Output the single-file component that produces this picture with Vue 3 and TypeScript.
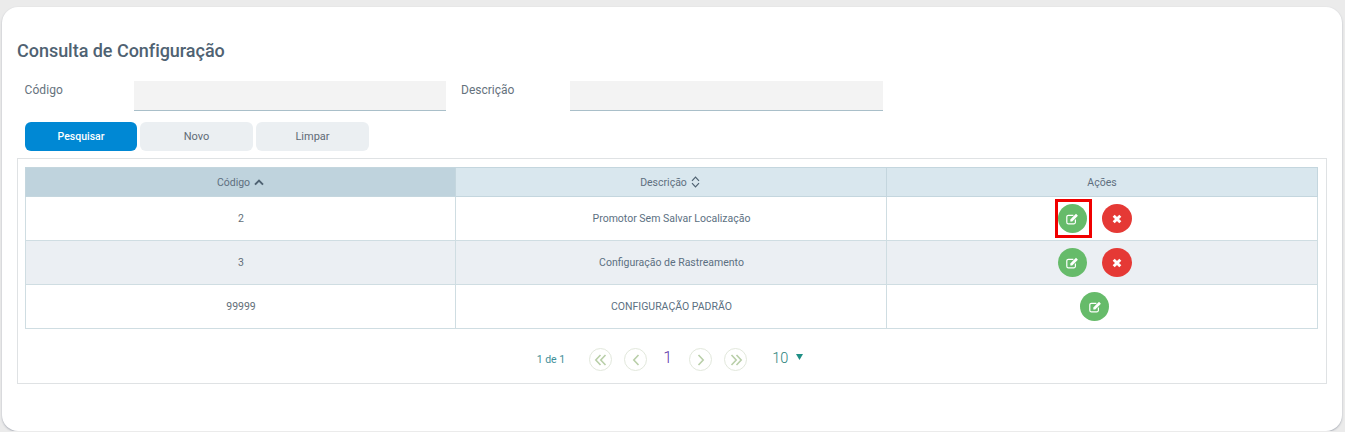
<script setup lang="ts">
interface Row { code: string; desc: string; del: boolean; mark: boolean }
const rows: Row[] = [
  { code: '2', desc: 'Promotor Sem Salvar Localização', del: true, mark: true },
  { code: '3', desc: 'Configuração de Rastreamento', del: true, mark: false },
  { code: '99999', desc: 'CONFIGURAÇÃO PADRÃO', del: false, mark: false },
]
</script>

<template>
  <main class="card">
    <h1 class="title">Consulta de Configuração</h1>
    <form class="filters" @submit.prevent>
      <label class="label first">Código</label>
      <input class="field" type="text" />
      <label class="label second">Descrição</label>
      <input class="field wide" type="text" />
    </form>
    <div class="buttons">
      <button class="btn primary">Pesquisar</button>
      <button class="btn">Novo</button>
      <button class="btn">Limpar</button>
    </div>
    <section class="panel">
      <table class="grid">
        <colgroup>
          <col class="col-a" />
          <col class="col-b" />
          <col class="col-c" />
        </colgroup>
        <thead>
          <tr>
            <th class="sorted">
              <span class="th-in">Código
                <svg class="sort" width="10" height="7" viewBox="0 0 10 7"><path d="M1 5.6 5 1.6l4 4" fill="none" stroke="#4f6272" stroke-width="2"/></svg>
              </span>
            </th>
            <th class="mid">
              <span class="th-in">Descrição
                <svg class="sort" width="9" height="12" viewBox="0 0 9 12"><path d="M1 4.8 4.5 1.2 8 4.8M1 7.2 4.5 10.8 8 7.2" fill="none" stroke="#4f6272" stroke-width="1.2"/></svg>
              </span>
            </th>
            <th>Ações</th>
          </tr>
        </thead>
        <tbody>
          <tr v-for="(r, i) in rows" :key="r.code" :class="{ alt: i === 1 }">
            <td class="text">{{ r.code }}</td>
            <td class="text desc">{{ r.desc }}</td>
            <td>
              <div class="actions">
                <span class="wrap" :class="{ marked: r.mark }">
                  <button class="round green" aria-label="Editar">
                    <svg class="edit" width="13" height="12" viewBox="0 0 13 12">
                      <path d="M9.4 6.6v2.6a1.6 1.6 0 0 1-1.6 1.6H2.4A1.6 1.6 0 0 1 .8 9.2V3.9a1.6 1.6 0 0 1 1.6-1.6h5" fill="none" stroke="#fff" stroke-width="1.2"/>
                      <path d="M4.3 6.5 10 .8l1.9 1.9-5.7 5.7H4.3z" fill="#fff"/>
                    </svg>
                  </button>
                </span>
                <button v-if="r.del" class="round red" aria-label="Excluir">
                  <svg width="10" height="10" viewBox="0 0 10 10"><path d="M1.7 1.7l6.6 6.6M8.3 1.7 1.7 8.3" stroke="#fff" stroke-width="2.9"/></svg>
                </button>
              </div>
            </td>
          </tr>
        </tbody>
      </table>
      <nav class="pager">
        <span class="count">1 de 1</span>
        <button class="page" aria-label="Primeira">
          <svg width="14" height="12" viewBox="0 0 14 12"><path d="M6.5 1 1.8 6l4.7 5M11.5 1 6.8 6l4.7 5" fill="none" stroke="#b9cfa9" stroke-width="1.6"/></svg>
        </button>
        <button class="page" aria-label="Anterior">
          <svg width="8" height="12" viewBox="0 0 8 12"><path d="M6.5 1 1.8 6l4.7 5" fill="none" stroke="#b9cfa9" stroke-width="1.6"/></svg>
        </button>
        <span class="current">1</span>
        <button class="page" aria-label="Próxima">
          <svg width="8" height="12" viewBox="0 0 8 12"><path d="M1.5 1l4.7 5-4.7 5" fill="none" stroke="#b9cfa9" stroke-width="1.6"/></svg>
        </button>
        <button class="page" aria-label="Última">
          <svg width="14" height="12" viewBox="0 0 14 12"><path d="M2.5 1l4.7 5-4.7 5M7.5 1l4.7 5-4.7 5" fill="none" stroke="#b9cfa9" stroke-width="1.6"/></svg>
        </button>
        <span class="size">10</span>
        <svg class="caret" width="7" height="6" viewBox="0 0 7 6"><path d="M0 0h7L3.5 6z" fill="#1f8f85"/></svg>
      </nav>
    </section>
  </main>
</template>

<style>
html, body { margin: 0; background: #ebebeb; }
</style>

<style scoped>
.card {
  box-sizing: border-box;
  width: 1340px;
  height: 424px;
  margin: 7px 0 0 2px;
  padding: 32px 15px 0;
  background: #fff;
  border-radius: 16px;
  box-shadow: 0 1px 2px rgba(90, 100, 120, 0.45);
  font-family: Roboto, "Liberation Sans", sans-serif;
  color: #55626e;
}
.title {
  margin: 0;
  font-size: 18px;
  line-height: 24px;
  font-weight: 500;
  letter-spacing: -0.03px;
  color: #4f6272;
}
.filters {
  display: flex;
  margin-top: 18px;
  height: 30px;
}
.label {
  font-size: 12px;
  line-height: 18px;
  color: #66727d;
}
.first { width: 117px; padding-left: 7.5px; box-sizing: border-box; letter-spacing: 0.1px; }
.second { width: 124px; padding-left: 15px; box-sizing: border-box; }
.field {
  box-sizing: border-box;
  width: 312px;
  height: 30px;
  padding: 0;
  border: 0;
  border-bottom: 1px solid #a9bfc9;
  background: #f3f3f3;
}
.wide { width: 313px; }
.buttons {
  display: flex;
  gap: 3px;
  margin: 11px 0 0 8px;
}
.btn {
  width: 113px;
  height: 29px;
  padding: 0;
  border: 0;
  border-radius: 6px;
  background: #ebeff2;
  color: #5f6b76;
  font: 400 11px Roboto, sans-serif;
}
.primary {
  width: 112px;
  background: #0088d4;
  color: #fff;
  font-size: 10.5px;
  font-weight: 500;
}
.panel {
  box-sizing: border-box;
  height: 226px;
  margin-top: 7px;
  padding: 8px 8px 0 7px;
  border: 1px solid #dfe2e4;
}
.grid {
  box-sizing: border-box;
  width: 1292px;
  table-layout: fixed;
  border-collapse: collapse;
  font-size: 10.5px;
  text-align: center;
  color: #626e78;
}
.col-a { width: 430px; }
.col-b { width: 431px; }
.col-c { width: 431px; }
th {
  height: 28px;
  padding: 0;
  font-weight: 400;
  font-size: 10.5px;
  color: #5e6f7f;
  background: #d9e7ee;
  border: 1px solid #c4d6de;
}
th.sorted { background: #bfd3dd; }
th.mid { padding-right: 2px; }
.th-in { display: inline-flex; align-items: center; gap: 4px; }
td {
  height: 43px;
  padding: 0;
  border: 1px solid #cfdde2;
}
td.text { padding-left: 1px; }
.desc { color: #5c7082; }
.alt td { background: #ebeff3; }
.actions {
  display: flex;
  justify-content: center;
  gap: 15px;
  padding-right: 15px;
}
.wrap { position: relative; display: flex; }
.marked::after {
  content: "";
  position: absolute;
  left: -3px;
  top: -5px;
  width: 31px;
  height: 33px;
  border: 3px solid #f00000;
  pointer-events: none;
}
.round {
  display: flex;
  align-items: center;
  justify-content: center;
  width: 29px;
  height: 29px;
  padding: 0;
  border: 0;
  border-radius: 50%;
}
.green { background: #66bb6a; }
.red { width: 30px; background: #e53935; }
.edit { margin-left: 1px; }
.pager {
  display: flex;
  align-items: center;
  justify-content: center;
  height: 61px;
  padding-right: 3px;
}
.count { font-size: 10.5px; color: #3f8f99; margin-right: 24px; }
.page {
  display: flex;
  align-items: center;
  justify-content: center;
  width: 23px;
  height: 23px;
  padding: 0;
  margin-right: 12px;
  background: #fff;
  border: 1px solid #e2e8dc;
  border-radius: 50%;
}
.current {
  width: 19px;
  margin: 0 0 5px -1px;
  padding-right: 12px;
  text-align: center;
  font-size: 16px;
  font-weight: 300;
  color: #5e35a8;
}
.size { margin: 0 0 3px 13px; font-size: 14.5px; font-weight: 300; color: #1f7f7a; }
.caret { margin: 0 0 5px 8px; }
</style>
